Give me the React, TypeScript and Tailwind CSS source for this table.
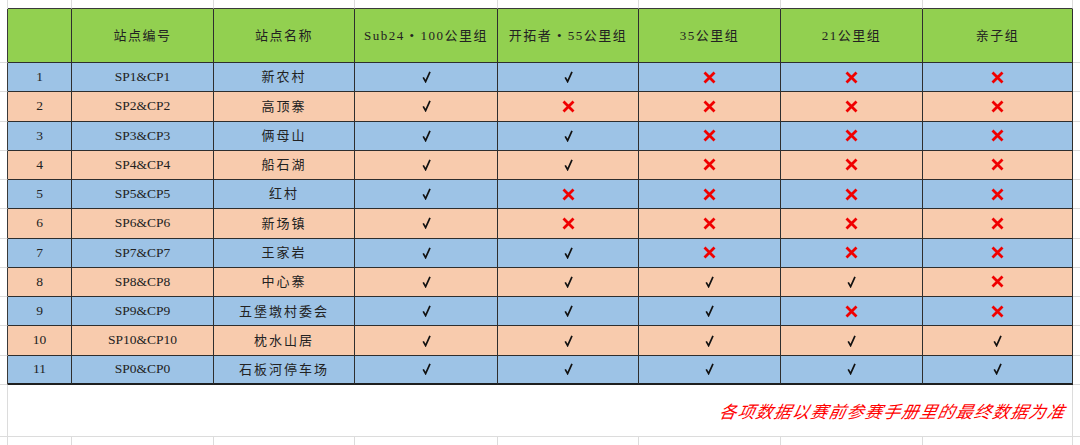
import React from 'react'

const cols = ['w-[64px]', 'w-[142px]', 'w-[141px]', 'w-[143px]', 'w-[141px]', 'w-[142px]', 'w-[142px]', 'w-[150px]']

const headers = ['', '站点编号', '站点名称', 'Sub24 • 100公里组', '开拓者 • 55公里组', '35公里组', '21公里组', '亲子组']

type Row = [string, string, string, number[]]

const rows: Row[] = [
  ['1', 'SP1&CP1', '新农村', [1, 1, 0, 0, 0]],
  ['2', 'SP2&CP2', '高顶寨', [1, 0, 0, 0, 0]],
  ['3', 'SP3&CP3', '俩母山', [1, 1, 0, 0, 0]],
  ['4', 'SP4&CP4', '船石湖', [1, 1, 0, 0, 0]],
  ['5', 'SP5&CP5', '红村', [1, 0, 0, 0, 0]],
  ['6', 'SP6&CP6', '新场镇', [1, 0, 0, 0, 0]],
  ['7', 'SP7&CP7', '王家岩', [1, 1, 0, 0, 0]],
  ['8', 'SP8&CP8', '中心寨', [1, 1, 1, 1, 0]],
  ['9', 'SP9&CP9', '五堡墩村委会', [1, 1, 1, 0, 0]],
  ['10', 'SP10&CP10', '枕水山居', [1, 1, 1, 1, 1]],
  ['11', 'SP0&CP0', '石板河停车场', [1, 1, 1, 1, 1]],
]

const font = { fontFamily: '"Liberation Serif", "Noto Sans CJK SC", serif' }

function Check() {
  return (
    <svg width="9" height="12" viewBox="0 0 9 12">
      <path d="M1.2 6.4 L3.6 10.6 L8 0.8" fill="none" stroke="#111" strokeWidth="1.7" strokeLinejoin="miter" />
    </svg>
  )
}

function Cross() {
  return (
    <svg width="13" height="13" viewBox="0 0 13 13">
      <path d="M1.5 1.5 L11.5 11.5 M11.5 1.5 L1.5 11.5" stroke="#f00000" strokeWidth="2.8" />
    </svg>
  )
}

// empty spreadsheet row with light grid lines
function SheetRow({ h }: { h: string }) {
  return (
    <div className={`flex ${h}`}>
      <div className="w-[8px] shrink-0 border-r border-b border-[#dcdcdc]" />
      {cols.map((c, i) => (
        <div key={i} className={`${c} shrink-0 border-r border-b border-[#dcdcdc]`} />
      ))}
      <div className="flex-1 border-b border-[#dcdcdc]" />
    </div>
  )
}

export default function App() {
  return (
    <div className="w-[1080px] h-[445px] bg-white overflow-hidden text-[#222]" style={font}>
      {/* top strip */}
      <div className="flex h-[9px]">
        <div className="w-[8px] shrink-0 border-r border-[#dcdcdc]" />
        {cols.map((c, i) => (
          <div key={i} className={`${c} shrink-0 border-r border-b border-r-[#dcdcdc] border-b-[#3a3a3a]`} />
        ))}
        <div className="flex-1" />
      </div>

      {/* header */}
      <div className="flex h-[54px]">
        <div className="w-[8px] shrink-0 border-r border-b border-r-[#3a3a3a] border-b-[#dcdcdc]" />
        {cols.map((c, i) => (
          <div
            key={i}
            className={`${c} shrink-0 bg-[#92d050] border-r border-b border-[#2e2e2e] flex items-center justify-center text-[13px] tracking-[1.5px]`}
          >
            {headers[i]}
          </div>
        ))}
        <div className="flex-1 border-b border-[#dcdcdc]" />
      </div>

      {/* data rows */}
      {rows.map((r, ri) => {
        const bg = ri % 2 === 0 ? 'bg-[#9dc3e6]' : 'bg-[#f8cbad]'
        const last = ri === rows.length - 1
        const cells: React.ReactNode[] = [r[0], r[1], <span className="tracking-[2px] text-[13px]">{r[2]}</span>, ...r[3].map((v) => (v ? <Check /> : <Cross />))]
        return (
          <div key={ri} className="flex h-[29.27px]">
            <div className="w-[8px] shrink-0 border-r border-b border-r-[#3a3a3a] border-b-[#dcdcdc]" />
            {cols.map((c, i) => (
              <div
                key={i}
                className={`${c} shrink-0 ${bg} border-r border-[#2e2e2e] flex items-center justify-center text-[13.5px] ${last ? 'border-b-2 border-b-[#1f1f1f]' : 'border-b'}`}
              >
                {cells[i]}
              </div>
            ))}
            <div className="flex-1 border-b border-[#dcdcdc]" />
          </div>
        )
      })}

      {/* note row */}
      <div className="flex h-[52px]">
        <div className="w-[8px] shrink-0 border-r border-b border-[#dcdcdc]" />
        <div className="w-[1065px] shrink-0 border-r border-b border-[#dcdcdc] flex items-center justify-end pr-[6px]">
          <span className="text-[17px] italic text-[#ff0000] tracking-[1.2px]" style={{ fontFamily: '"Noto Sans CJK SC", sans-serif', transform: 'skewX(-12deg)' }}>
            各项数据以赛前参赛手册里的最终数据为准
          </span>
        </div>
        <div className="flex-1 border-b border-[#dcdcdc]" />
      </div>

      <SheetRow h="h-[30px]" />
    </div>
  )
}
